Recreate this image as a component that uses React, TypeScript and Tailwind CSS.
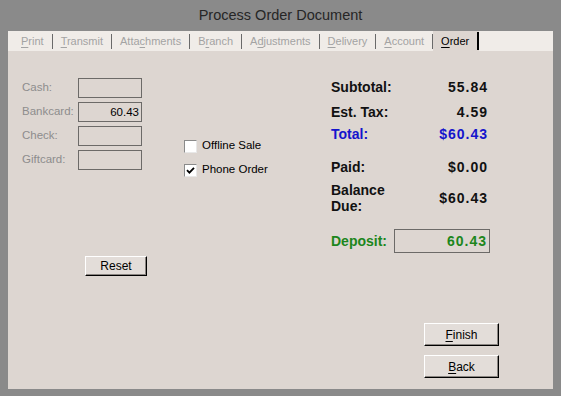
import React from 'react';

const tabs = [
  { pre: '', key: 'P', post: 'rint' },
  { pre: '', key: 'T', post: 'ransmit' },
  { pre: 'Atta', key: 'c', post: 'hments' },
  { pre: 'B', key: 'r', post: 'anch' },
  { pre: 'A', key: 'd', post: 'justments' },
  { pre: '', key: 'D', post: 'elivery' },
  { pre: '', key: 'A', post: 'ccount' },
];

const payments = [
  { label: 'Cash:', value: '' },
  { label: 'Bankcard:', value: '60.43' },
  { label: 'Check:', value: '' },
  { label: 'Giftcard:', value: '' },
];

function WinButton({ children, className = '' }: { children: React.ReactNode; className?: string }) {
  return (
    <button
      className={`flex items-center justify-center bg-[#e3ddd9] border-t border-l border-t-white border-l-white border-r border-b border-r-black border-b-black shadow-[inset_-1px_-1px_0_#8a8581] text-[12px] text-black leading-none ${className}`}
    >
      {children}
    </button>
  );
}

function Checkbox({ checked, label }: { checked: boolean; label: string }) {
  return (
    <div className="flex items-center h-[16px]">
      <div className="w-[13px] h-[13px] bg-white border-t border-l border-t-[#8a8a8a] border-l-[#8a8a8a] border-r border-b border-r-[#e8e8e8] border-b-[#e8e8e8] flex items-center justify-center">
        {checked && (
          <svg width="9" height="9" viewBox="0 0 9 9">
            <path d="M1 4.2 L3.4 6.6 L8 1.8" stroke="#000" strokeWidth="1.8" fill="none" />
          </svg>
        )}
      </div>
      <span className="ml-[5px] text-[11.5px] text-black">{label}</span>
    </div>
  );
}

export default function App() {
  return (
    <div className="w-[561px] h-[396px] bg-[#8a8a8a] flex flex-col px-[8px] pb-[7px] font-['Liberation_Sans',Arial,sans-serif]">
      <div className="h-[31px] flex items-center justify-center text-[14.5px] text-[#262626]">
        Process Order Document
      </div>

      <div className="flex-1 flex flex-col bg-[#ddd6d1]">
        {/* tab strip */}
        <div className="h-[20px] bg-[#f0ece8] flex items-stretch pl-[5px] text-[11px] text-[#a3a3a3]">
          {tabs.map((t) => (
            <div key={t.post} className="flex items-center">
              <span className="px-[8px]">
                {t.pre}
                <span className="underline underline-offset-2">{t.key}</span>
                {t.post}
              </span>
              <span className="w-px h-[15px] bg-[#6a6a6a]" />
            </div>
          ))}
          <div className="flex items-center bg-[#ddd6d1] text-black">
            <span className="px-[8px]">
              <span className="underline underline-offset-2">O</span>rder
            </span>
            <span className="w-[2px] h-[18px] bg-black" />
          </div>
        </div>

        <div className="flex pt-[27px] pl-[14px]">
          {/* payments */}
          <div className="w-[162px] flex flex-col">
            <div className="flex flex-col gap-[4px]">
              {payments.map((p) => (
                <div key={p.label} className="flex items-center h-[20px]">
                  <span className="w-[56px] text-[11.5px] text-[#8d8d8d]">{p.label}</span>
                  <div className="w-[64px] h-[20px] border border-[#6c6a68] text-right pr-[2px] text-[11.5px] leading-[18px] text-black">
                    {p.value}
                  </div>
                </div>
              ))}
            </div>
            <WinButton className="mt-[86px] ml-[63px] w-[62px] h-[20px]">Reset</WinButton>
          </div>

          {/* options */}
          <div className="w-[147px] flex flex-col gap-[8px] mt-[60px]">
            <Checkbox checked={false} label="Offline Sale" />
            <Checkbox checked label="Phone Order" />
          </div>

          {/* totals */}
          <div className="w-[159px] flex flex-col mt-[1px] text-[14px] font-bold leading-[16px] text-[#111]">
            <div className="flex justify-between pr-[2px]">
              <span>Subtotal:</span>
              <span className="tracking-[1px]">55.84</span>
            </div>
            <div className="flex justify-between pr-[2px] mt-[9px]">
              <span>Est. Tax:</span>
              <span className="tracking-[1px]">4.59</span>
            </div>
            <div className="flex justify-between pr-[2px] mt-[6px] text-[#1414cc]">
              <span>Total:</span>
              <span className="tracking-[1px]">$60.43</span>
            </div>
            <div className="flex justify-between pr-[2px] mt-[17px]">
              <span>Paid:</span>
              <span className="tracking-[1px]">$0.00</span>
            </div>
            <div className="flex justify-between items-center pr-[2px] mt-[7px]">
              <span>
                Balance
                <br />
                Due:
              </span>
              <span className="tracking-[1px]">$60.43</span>
            </div>
            <div className="flex items-center justify-between mt-[15px] text-[#1c861c]">
              <span>Deposit:</span>
              <div className="w-[96px] h-[24px] border border-[#6c6a68] text-right pr-[2px] leading-[22px] tracking-[1px]">
                60.43
              </div>
            </div>
          </div>
        </div>

        <div className="mt-auto flex flex-col items-end gap-[9px] pr-[54px] pb-[11px]">
          <WinButton className="w-[75px] h-[23px]">
            <span className="underline underline-offset-2">F</span>inish
          </WinButton>
          <WinButton className="w-[75px] h-[23px]">
            <span className="underline underline-offset-2">B</span>ack
          </WinButton>
        </div>
      </div>
    </div>
  );
}
